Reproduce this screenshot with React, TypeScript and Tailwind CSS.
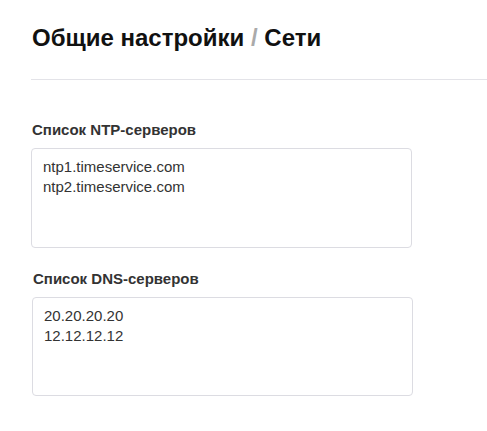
export default function App() {
  return (
    <div className="min-h-screen bg-white font-['Liberation_Sans',Arial,sans-serif] text-[#111]">
      <div className="pl-[31px] pt-[24px]">
        <h1 className="pl-px text-[24px] font-bold leading-[28px] text-[#111]">
          Общие настройки <span className="text-[#aaa]">/</span> Сети
        </h1>
        <div className="mt-[27px] h-px bg-[#e3e3e8]" />
      </div>

      <div className="pl-[31px] pt-[40px]">
        <label className="block pl-px text-[15px] font-bold leading-[20px] text-[#333]">
          Список NTP-серверов
        </label>
        <textarea
          readOnly
          value={'ntp1.timeservice.com\nntp2.timeservice.com'}
          className="mt-[8px] block h-[100px] w-[381px] resize-none rounded-[4px] border border-[#dcdce2] px-[11px] py-[8px] text-[15px] leading-[20px] text-[#333] outline-none"
        />

        <div className="pl-px">
          <label className="mt-[21px] block pl-px text-[15px] font-bold leading-[20px] text-[#333]">
            Список DNS-серверов
          </label>
          <textarea
            readOnly
            value={'20.20.20.20\n12.12.12.12'}
            className="mt-[8px] block h-[99px] w-[381px] resize-none rounded-[4px] border border-[#dcdce2] px-[11px] py-[8px] text-[15px] leading-[20px] text-[#333] outline-none"
          />
        </div>
      </div>
    </div>
  );
}
